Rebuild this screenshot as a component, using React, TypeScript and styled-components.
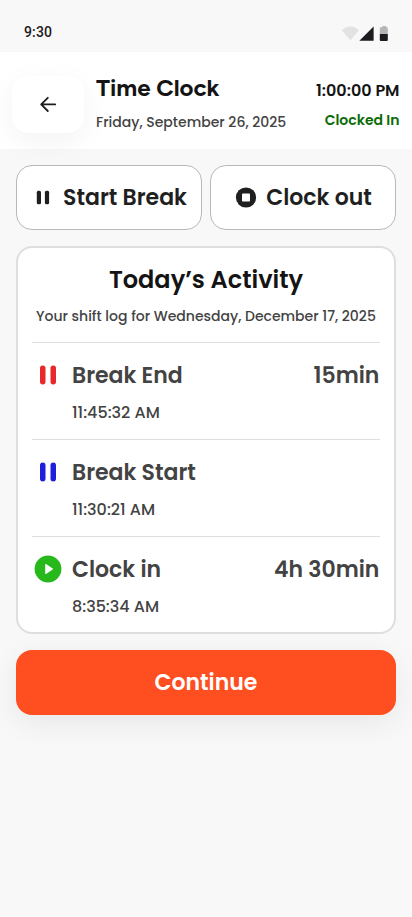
import React from "react";
import styled, { createGlobalStyle } from "styled-components";

const GlobalStyle = createGlobalStyle`
  * { box-sizing: border-box; }
  body {
    margin: 0;
    background: #f8f8f8;
    font-family: Poppins, Inter, sans-serif;
  }
  button { font-family: inherit; padding: 0; cursor: pointer; }
`;

type TextProps = {
  $size: number;
  $line: number;
  $weight?: number;
  $color?: string;
};

const Text = styled.span<TextProps>`
  display: block;
  margin: 0;
  white-space: nowrap;
  font-size: ${(p) => p.$size}px;
  line-height: ${(p) => p.$line}px;
  font-weight: ${(p) => p.$weight ?? 500};
  color: ${(p) => p.$color ?? "#434343"};
`;

const Screen = styled.div`
  height: 917px;
  display: flex;
  flex-direction: column;
  background: #f8f8f8;
`;

const StatusBar = styled.div`
  height: 52px;
  flex: none;
  display: flex;
  justify-content: space-between;
  padding: 22px 24px 0;
`;

const Clock = styled(Text)`
  font-family: Roboto, sans-serif;
  letter-spacing: 0.14px;
`;

const StatusIcons = styled.svg`
  display: block;
  margin-top: 3px;
`;

const Header = styled.header`
  height: 97px;
  flex: none;
  display: flex;
  padding: 24px 12px 0;
  background: #fff;
`;

const BackButton = styled.button`
  width: 72px;
  height: 57px;
  flex: none;
  display: flex;
  align-items: center;
  justify-content: center;
  padding-bottom: 1px;
  border: 0;
  border-radius: 16px;
  background: #fff;
  box-shadow: 0 8px 30px rgba(0, 0, 0, 0.05);
`;

const HeaderTitle = styled.div`
  flex: 1;
  display: flex;
  flex-direction: column;
  gap: 12px;
  margin-left: 12px;
`;

const Title = styled(Text)`
  font-family: Figtree, Inter, sans-serif;
`;

const HeaderStatus = styled.div`
  display: flex;
  flex-direction: column;
  align-items: flex-end;
  gap: 7px;
  margin: 3px 0.5px 0 0;
`;

const Content = styled.main`
  display: flex;
  flex-direction: column;
  gap: 16px;
  padding: 16px 16px 0;
`;

const Actions = styled.div`
  display: grid;
  grid-template-columns: 1fr 1fr;
  gap: 8px;
`;

const ActionButton = styled.button`
  height: 65px;
  display: flex;
  align-items: center;
  justify-content: center;
  gap: 8px;
  border: 1px solid #b8b8b8;
  border-radius: 16px;
  background: #fff;
`;

const ActionIcon = styled.svg`
  margin-bottom: 1px;
`;

const Card = styled.section`
  height: 388px;
  padding: 14px 14px 0;
  border: 2px solid #dedede;
  border-radius: 16px;
  background: #fff;
`;

const CardHead = styled.div`
  display: flex;
  flex-direction: column;
  align-items: center;
  gap: 8px;
  padding-bottom: 15px;
`;

const Entry = styled.div`
  height: 97px;
  display: flex;
  padding: 16px 0.6px 0 0;
  border-top: 1px solid #dedede;
`;

const EntryIcon = styled.svg`
  flex: none;
  margin-right: 8px;
`;

const EntryBody = styled.div`
  flex: 1;
  display: flex;
  flex-direction: column;
  gap: 9px;
`;

const ContinueButton = styled.button`
  height: 65px;
  display: flex;
  align-items: center;
  justify-content: center;
  border: 0;
  border-radius: 16px;
  background: #ff4f21;
  box-shadow: 0 8px 30px rgba(0, 0, 0, 0.07);
`;

const PauseIcon = ({ color }: { color: string }) => (
  <EntryIcon width="32" height="32" viewBox="0 0 32 32" fill={color}>
    <rect x="8" y="6.6" width="5.5" height="18.8" rx="2.7" />
    <rect x="18.5" y="6.6" width="5.5" height="18.8" rx="2.7" />
  </EntryIcon>
);

const PlayIcon = () => (
  <EntryIcon width="32" height="32" viewBox="0 0 32 32">
    <circle cx="16" cy="16" r="13.4" fill="#27b91b" />
    <path d="M13.2 11.4v9.2a.5.5 0 0 0 .8.4l6.7-4.6a.5.5 0 0 0 0-.8L14 11a.5.5 0 0 0-.8.4z" fill="#fff" />
  </EntryIcon>
);

const entries = [
  { name: "Break End", time: "11:45:32 AM", total: "15min", icon: <PauseIcon color="#e8282b" /> },
  { name: "Break Start", time: "11:30:21 AM", total: "", icon: <PauseIcon color="#2020dc" /> },
  { name: "Clock in", time: "8:35:34 AM", total: "4h 30min", icon: <PlayIcon /> },
];

export default function App() {
  return (
    <>
      <GlobalStyle />
      <Screen>
        <StatusBar>
          <Clock $size={14} $line={20} $color="#1d1b20">9:30</Clock>
          <StatusIcons width="48" height="18" viewBox="0 0 48 18">
            <path d="M1.8 5.3C6.3.1 14.2.1 18.9 5.3L10.4 15.4z" fill="#e2e2e2" />
            <path d="M33.6 1.6v14.2H19.4z" fill="#1d1b20" />
            <path d="M40.6 2.2h1.8V1H46v1.2h1.1q.7 0 .7.7V9h-8V3q0-.8.8-.8z" fill="#b5b5b5" />
            <path d="M39.8 9h8v6q0 1-1 1h-6q-1 0-1-1z" fill="#1d1b20" />
          </StatusIcons>
        </StatusBar>
        <Header>
          <BackButton aria-label="Back">
            <svg width="24" height="24" viewBox="0 0 24 24" fill="none" stroke="#1c1c1c" strokeWidth="1.8" strokeLinecap="round" strokeLinejoin="round">
              <path d="M19.2 12.4H5.2M11.8 5.8L5.2 12.4l6.6 6.6" />
            </svg>
          </BackButton>
          <HeaderTitle>
            <Title as="h1" $size={24} $line={24} $weight={700} $color="#141414">Time Clock</Title>
            <Text $size={14} $line={20}>Friday, September 26, 2025</Text>
          </HeaderTitle>
          <HeaderStatus>
            <Text $size={16} $line={24} $weight={600} $color="#141414">1:00:00 PM</Text>
            <Text $size={14} $line={20} $weight={600} $color="#0a6b05">Clocked In</Text>
          </HeaderStatus>
        </Header>
        <Content>
          <Actions>
            <ActionButton>
              <ActionIcon width="24" height="24" viewBox="0 0 24 24" fill="#1f1f1f">
                <rect x="5.8" y="5.7" width="4.2" height="13.6" rx="1.5" />
                <rect x="13.9" y="5.7" width="4.2" height="13.6" rx="1.5" />
              </ActionIcon>
              <Text $size={22} $line={33} $weight={600} $color="#1f1f1f">Start Break</Text>
            </ActionButton>
            <ActionButton>
              <ActionIcon width="24" height="24" viewBox="0 0 24 24">
                <circle cx="12" cy="12.5" r="10.1" fill="#1f1f1f" />
                <rect x="8" y="8.5" width="8" height="8" rx=".8" fill="#fff" />
              </ActionIcon>
              <Text $size={22} $line={33} $weight={600} $color="#1f1f1f">Clock out</Text>
            </ActionButton>
          </Actions>
          <Card>
            <CardHead>
              <Text as="h2" $size={24} $line={36} $weight={600} $color="#141414">Today’s Activity</Text>
              <Text $size={14} $line={21}>Your shift log for Wednesday, December 17, 2025</Text>
            </CardHead>
            {entries.map((e) => (
              <Entry key={e.name}>
                {e.icon}
                <EntryBody>
                  <Text $size={22} $line={33} $weight={600}>{e.name}</Text>
                  <Text $size={16} $line={24}>{e.time}</Text>
                </EntryBody>
                <Text $size={22} $line={33} $weight={600}>{e.total}</Text>
              </Entry>
            ))}
          </Card>
          <ContinueButton>
            <Text $size={22} $line={33} $weight={600} $color="#fff">Continue</Text>
          </ContinueButton>
        </Content>
      </Screen>
    </>
  );
}
